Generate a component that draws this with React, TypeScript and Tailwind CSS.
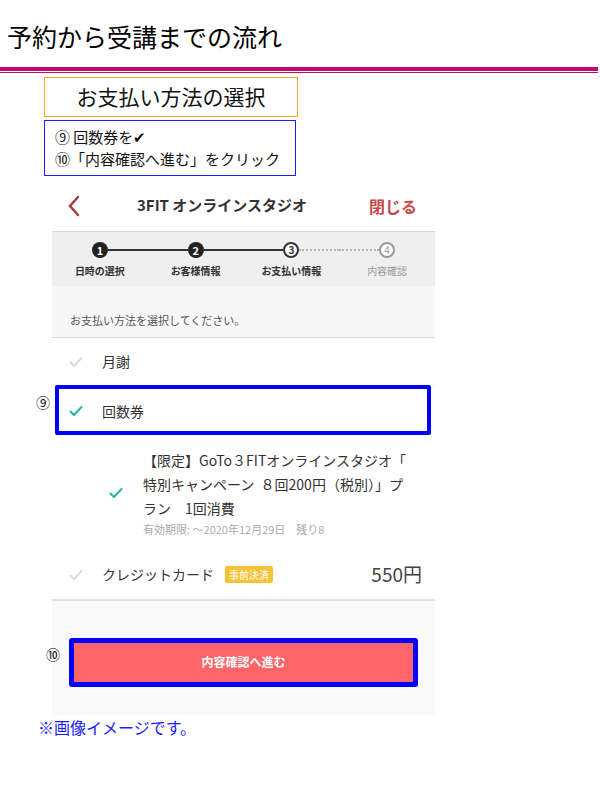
import React from 'react';

const font = { fontFamily: '"Noto Sans CJK JP", "Noto Sans", sans-serif' };

const Check = ({ active }: { active?: boolean }) => (
  <svg width="14" height="12" viewBox="0 0 14 12" className="shrink-0">
    <path
      d="M1.5 6.5 L5 10 L12.5 2"
      fill="none"
      stroke={active ? '#1fb5a8' : '#dcdcdc'}
      strokeWidth="2"
      strokeLinecap="round"
      strokeLinejoin="round"
    />
  </svg>
);

type Step = { n: string; label: string; state: 'done' | 'current' | 'todo' };

const steps: Step[] = [
  { n: '1', label: '日時の選択', state: 'done' },
  { n: '2', label: 'お客様情報', state: 'done' },
  { n: '3', label: 'お支払い情報', state: 'current' },
  { n: '4', label: '内容確認', state: 'todo' },
];

const StepBar = () => (
  <div className="grid grid-cols-4 bg-[#efefef] border-t border-[#d6d6d6] h-[55px] pt-[10px]">
    {steps.map((s, i) => (
      <div key={s.n} className="flex flex-col items-center">
        <div className="flex items-center w-full h-[16px]">
          <div
            className={`flex-1 ${
              i === 0 ? '' : i === 3 ? 'border-t-2 border-dotted border-[#b5b5b5]' : 'border-t-2 border-[#333]'
            }`}
          />
          {s.state === 'done' ? (
            <div className="w-[16px] h-[16px] rounded-full bg-[#222] text-white text-[11px] font-bold flex items-center justify-center leading-none">
              {s.n}
            </div>
          ) : s.state === 'current' ? (
            <div className="w-[16px] h-[16px] rounded-full bg-white border-2 border-[#333] text-[#333] text-[10px] font-bold flex items-center justify-center leading-none">
              {s.n}
            </div>
          ) : (
            <div className="w-[16px] h-[16px] rounded-full bg-white border-2 border-[#9a9a9a] text-[#9a9a9a] text-[10px] flex items-center justify-center leading-none">
              {s.n}
            </div>
          )}
          <div
            className={`flex-1 ${
              i === 3 ? '' : i === 2 ? 'border-t-2 border-dotted border-[#b5b5b5]' : 'border-t-2 border-[#333]'
            }`}
          />
        </div>
        <div
          className={`mt-[5px] text-[10px] ${
            s.state === 'todo' ? 'text-[#999]' : 'text-[#333] font-bold'
          }`}
        >
          {s.label}
        </div>
      </div>
    ))}
  </div>
);

export default function App() {
  return (
    <div className="w-[600px] h-[786px] bg-white relative overflow-hidden" style={font}>
      {/* heading */}
      <div className="pt-[18px] pl-[7px] text-[25px] leading-[36px] text-black">予約から受講までの流れ</div>
      <div className="mt-[13px] w-[598px] h-[4px] bg-[#c2096b]" />
      <div className="mt-[1px] w-[598px] h-[1px] bg-[#c2096b]" />

      {/* instructions */}
      <div className="ml-[44px] mt-[4px] w-[254px] h-[40px] border border-[#f2a81d] flex items-center justify-center text-[21px] text-[#111]">
        お支払い方法の選択
      </div>
      <div className="ml-[44px] mt-[3px] w-[252px] h-[56px] border border-[#1a1aff] pl-[10px] pt-[5px] text-[15px] leading-[22px] text-[#111]">
        <div>⑨ 回数券を✔</div>
        <div>⑩「内容確認へ進む」をクリック</div>
      </div>

      {/* phone screen */}
      <div className="relative ml-[52px] mt-[4px] w-[383px]">
        <div className="h-[51px] flex items-center bg-white">
          <svg width="14" height="22" viewBox="0 0 14 22" className="ml-[15px]">
            <path d="M11 2 L3 11 L11 20" fill="none" stroke="#a83c3c" strokeWidth="2.5" strokeLinecap="round" />
          </svg>
          <div className="ml-[56px] text-[15px] font-bold text-[#333]">3FIT オンラインスタジオ</div>
          <div className="ml-auto mr-[18px] text-[16px] font-bold text-[#c8474a]">閉じる</div>
        </div>

        <StepBar />

        <div className="bg-[#f7f7f7] h-[52px] border-b border-[#dcdcdc] flex items-end pb-[9px] pl-[18px] text-[11px] text-[#555]">
          お支払い方法を選択してください。
        </div>

        <div className="h-[48px] flex items-center pl-[17px] border-b border-[#eeeeee]">
          <Check />
          <span className="ml-[19px] text-[14px] text-[#333]">月謝</span>
        </div>
        <div className="h-[50px] flex items-center pl-[17px]">
          <Check active />
          <span className="ml-[19px] text-[14px] text-[#333]">回数券</span>
        </div>

        <div className="flex items-center pl-[57px] pt-[12px] pb-[13px]">
          <Check active />
          <div className="ml-[20px] pr-[8px]">
            <div className="text-[14px] leading-[24px] text-[#333] whitespace-nowrap">
              【限定】GoTo３FITオンラインスタジオ「
              <br />
              特別キャンペーン&nbsp;&nbsp;８回200円（税別）」プ
              <br />
              ラン　1回消費
            </div>
            <div className="mt-[1px] text-[11px] text-[#aaa]">有効期限: 〜2020年12月29日　残り8</div>
          </div>
        </div>

        <div className="h-[50px] flex items-center pl-[17px] pr-[13px] border-b-2 border-[#e2e2e2]">
          <Check />
          <span className="ml-[19px] text-[14px] text-[#333]">クレジットカード</span>
          <span className="ml-[11px] px-[4px] h-[17px] rounded-[2px] bg-[#f6c338] text-white text-[10px] leading-[17px]">
            事前決済
          </span>
          <span className="ml-auto text-[19px] text-[#444]">550円</span>
        </div>

        <div className="bg-[#f9f9f9] h-[114px] pt-[37px] pl-[17px] pr-[17px]">
          <div className="h-[49px] rounded-[3px] border-[5px] border-[#0000ff] bg-[#ff6469] flex items-center justify-center text-[12px] font-bold text-white">
            内容確認へ進む
          </div>
        </div>

        {/* annotation overlays */}
        <div className="absolute left-[3px] top-[205px] w-[376px] h-[50px] border-[4px] border-[#0000ff] rounded-[2px]" />
        <div className="absolute left-[-16px] top-[212px] text-[14px] text-[#111]">⑨</div>
        <div className="absolute left-[-6px] top-[464px] text-[14px] text-[#111]">⑩</div>
      </div>

      <div className="ml-[38px] text-[16px] leading-[24px] text-[#1a1aff]">※画像イメージです。</div>
    </div>
  );
}
